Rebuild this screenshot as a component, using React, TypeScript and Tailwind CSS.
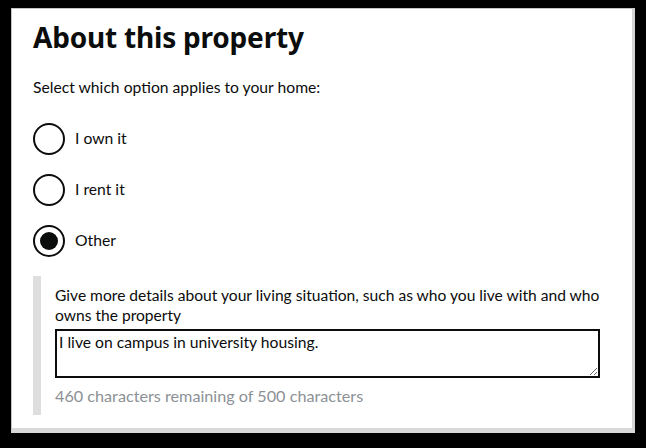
import React from "react";

function Radio({ label, checked }: { label: string; checked?: boolean }) {
  return (
    <div className="flex items-center h-[32px]">
      <div className="w-[32px] h-[32px] rounded-full border-2 border-[#0b0c0c] flex items-center justify-center shrink-0">
        {checked && <div className="w-[18px] h-[18px] rounded-full bg-[#0b0c0c]" />}
      </div>
      <span className="ml-[10px] text-[15.7px] text-[#0b0c0c] font-['Lato',sans-serif]">{label}</span>
    </div>
  );
}

export default function App() {
  return (
    <div className="w-[646px] h-[448px] bg-black pt-[8px] pl-[11px]">
      <div className="w-[624px] h-[425px] bg-white border-l border-t border-[#c4c4c4] border-r-[3px] border-r-[#d4d4d4] border-b-[5px] border-b-[#d8d8d8] pl-[21px] pt-[10px] font-['Lato',sans-serif]">
        <h1 className="text-[28px] leading-[36px] font-bold text-[#0b0c0c] tracking-[-0.2px] font-['Noto_Sans',sans-serif]">About this property</h1>
        <p className="mt-[22px] text-[15.7px] leading-[20px] text-[#0b0c0c]">Select which option applies to your home:</p>
        <div className="mt-[26px] flex flex-col gap-[19px]">
          <Radio label="I own it" />
          <Radio label="I rent it" />
          <Radio label="Other" checked />
        </div>
        <div className="mt-[19px] flex">
          <div className="w-[8px] h-[139px] bg-[#dedede] shrink-0" />
          <div className="pl-[14px] pt-[9px]">
            <p className="text-[15.6px] leading-[20px] text-[#0b0c0c] w-[560px]">
              Give more details about your living situation, such as who you live with and who owns the property
            </p>
            <textarea
              readOnly
              defaultValue="I live on campus in university housing."
              className="mt-[4px] block w-[545px] h-[49px] border-2 border-[#0b0c0c] px-[2px] py-[2px] text-[15.7px] leading-[18px] text-[#0b0c0c] font-['Lato',sans-serif] outline-none resize-y"
            />
            <p className="mt-[8px] text-[16.2px] leading-[20px] text-[#8c9196]">460 characters remaining of 500 characters</p>
          </div>
        </div>
      </div>
    </div>
  );
}
